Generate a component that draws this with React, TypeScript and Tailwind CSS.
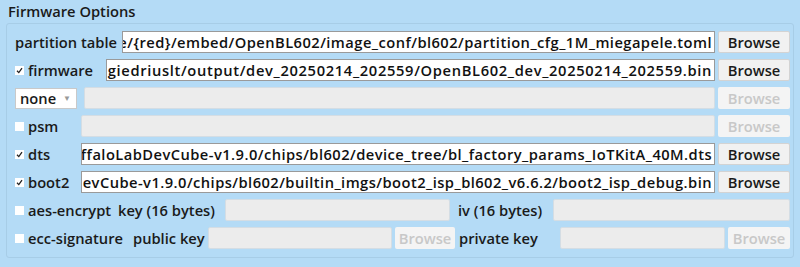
import React from "react";

const font = { fontFamily: '"Open Sans", "Noto Sans", sans-serif' };

function Check({ on }: { on: boolean }) {
  return (
    <span className="inline-flex w-[9px] h-[9px] bg-white items-center justify-center shrink-0">
      {on && (
        <svg width="7" height="7" viewBox="0 0 7 7">
          <path d="M1 3.8 L2.8 5.6 L6 1.2" stroke="#222" strokeWidth="1.3" fill="none" />
        </svg>
      )}
    </span>
  );
}

function PathBox({ value, className }: { value?: string; className: string }) {
  if (value === undefined) {
    return <div className={`h-[22px] bg-[#ececec] border border-[#d4dde4] rounded-[2px] ${className}`} />;
  }
  return (
    <div className={`h-[22px] bg-white border border-[#9a9a9a] flex justify-end items-center overflow-hidden whitespace-nowrap px-[2px] text-[#111] ${className}`}>
      {value}
    </div>
  );
}

function Browse({ disabled, className = "w-[72px]" }: { disabled?: boolean; className?: string }) {
  return (
    <div
      className={`h-[22px] flex items-center justify-center rounded-[2px] shrink-0 ${className} ${
        disabled ? "bg-[#f4f4f4] text-[#c8c8c8]" : "bg-[#f1f1f1] border border-[#d3d3d3] text-[#1a1a1a]"
      }`}
    >
      Browse
    </div>
  );
}

export default function App() {
  return (
    <div className="w-[800px] h-[267px] bg-[#b4dbf6] text-[#1a1a1a] overflow-hidden text-[14.7px] font-semibold" style={font}>
      <div className="pl-[8px] pt-[2px] leading-[18px]">Firmware Options</div>
      <div className="mx-[6px] mt-[3px] border border-[#a7cde7] rounded-[3px] h-[235px] pl-[8px] pr-[3px] pt-[7px] flex flex-col gap-[6px]">
        {/* partition table */}
        <div className="flex items-center h-[22px]">
          <span className="w-[107px] shrink-0 whitespace-nowrap">partition table</span>
          <PathBox className="flex-1 tracking-[0.45px]" value="e/{red}/embed/OpenBL602/image_conf/bl602/partition_cfg_1M_miegapele.toml" />
          <Browse className="w-[72px] ml-[3px]" />
        </div>
        {/* firmware */}
        <div className="flex items-center h-[22px]">
          <Check on />
          <span className="w-[82px] pl-[4px] shrink-0">firmware</span>
          <PathBox className="flex-1 tracking-[0.66px]" value="giedriuslt/output/dev_20250214_202559/OpenBL602_dev_20250214_202559.bin" />
          <Browse className="w-[72px] ml-[3px]" />
        </div>
        {/* none */}
        <div className="flex items-center h-[22px]">
          <div className="w-[62px] h-[21px] bg-white border border-[#c9c9c9] flex items-center justify-between pl-[4px] pr-[5px] shrink-0">
            <span>none</span>
            <span className="text-[8px] text-[#999]">▼</span>
          </div>
          <div className="w-[7px] shrink-0" />
          <PathBox className="flex-1" />
          <Browse disabled className="w-[72px] ml-[3px]" />
        </div>
        {/* psm */}
        <div className="flex items-center h-[22px]">
          <Check on={false} />
          <span className="w-[57px] pl-[4px] shrink-0">psm</span>
          <PathBox className="flex-1" />
          <Browse disabled className="w-[72px] ml-[3px]" />
        </div>
        {/* dts */}
        <div className="flex items-center h-[22px]">
          <Check on />
          <span className="w-[57px] pl-[4px] shrink-0">dts</span>
          <PathBox className="flex-1 tracking-[0.45px]" value="ffaloLabDevCube-v1.9.0/chips/bl602/device_tree/bl_factory_params_IoTKitA_40M.dts" />
          <Browse className="w-[72px] ml-[3px]" />
        </div>
        {/* boot2 */}
        <div className="flex items-center h-[22px]">
          <Check on />
          <span className="w-[57px] pl-[4px] shrink-0">boot2</span>
          <PathBox className="flex-1 tracking-[0.45px]" value="evCube-v1.9.0/chips/bl602/builtin_imgs/boot2_isp_bl602_v6.6.2/boot2_isp_debug.bin" />
          <Browse className="w-[72px] ml-[3px]" />
        </div>
        {/* aes */}
        <div className="flex items-center h-[22px]">
          <Check on={false} />
          <span className="w-[94px] pl-[4px] shrink-0 whitespace-nowrap">aes-encrypt</span>
          <span className="w-[107px] shrink-0 whitespace-nowrap">key (16 bytes)</span>
          <PathBox className="w-[225px] shrink-0" />
          <span className="w-[103px] pl-[8px] shrink-0 whitespace-nowrap">iv (16 bytes)</span>
          <PathBox className="flex-1" />
        </div>
        {/* ecc */}
        <div className="flex items-center h-[22px]">
          <Check on={false} />
          <span className="w-[109px] pl-[4px] shrink-0 whitespace-nowrap">ecc-signature</span>
          <span className="w-[75px] shrink-0 whitespace-nowrap">public key</span>
          <PathBox className="w-[184px] shrink-0" />
          <Browse disabled className="w-[60px] ml-[3px]" />
          <span className="w-[105px] pl-[4px] shrink-0 whitespace-nowrap">private key</span>
          <PathBox className="flex-1" />
          <Browse disabled className="w-[62px] ml-[3px]" />
        </div>
      </div>
    </div>
  );
}
